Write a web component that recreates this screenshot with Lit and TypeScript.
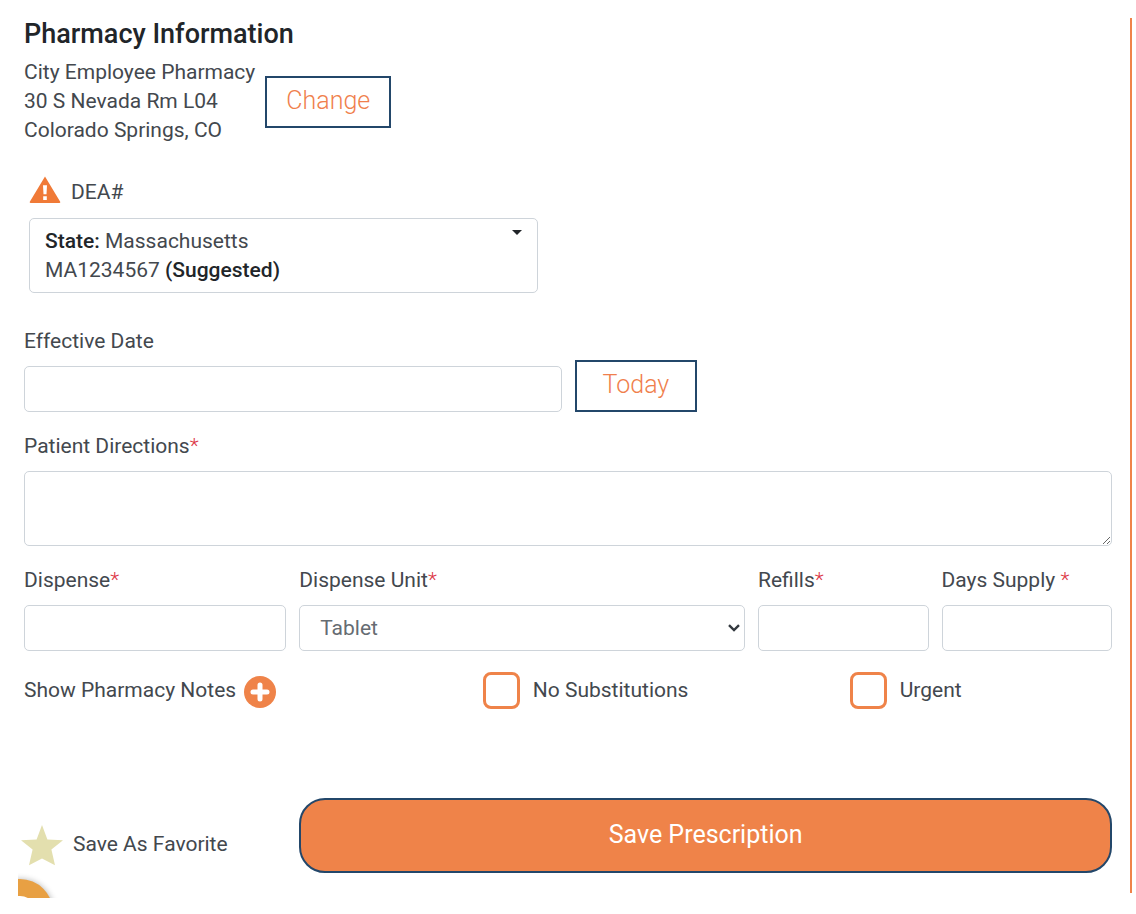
import { LitElement, html, css } from "lit";
import { customElement } from "lit/decorators.js";

@customElement("app-root")
export class AppRoot extends LitElement {
  static styles = css`
    :host {
      display: block;
      padding: 18px 4px 16px 18px;
      background: #fff;
      color: #43484e;
      font-family: Roboto, "Noto Sans", sans-serif;
      font-size: 21px;
      font-weight: 400;
      line-height: 29px;
    }
    * {
      box-sizing: border-box;
    }
    button,
    input,
    select,
    textarea {
      font: inherit;
      color: inherit;
      margin: 0;
    }
    .panel {
      position: relative;
      border-right: 2px solid #ef8349;
      padding: 0 18px 20px 6px;
    }
    h2 {
      margin: 0 0 8px;
      font-size: 27px;
      font-weight: 500;
      line-height: 32px;
      color: #212529;
    }
    .pharmacy {
      display: flex;
      align-items: center;
      gap: 10px;
    }
    address {
      font-style: normal;
    }
    .outline {
      border: 2px solid #23476a;
      background: #fff;
      color: #f07f4d;
      font-size: 25px;
      font-weight: 300;
      line-height: 32px;
      padding: 7px 19px 9px;
    }
    .outline.wide {
      padding-inline: 26px;
    }
    .dea {
      padding: 31px 0 0 5px;
    }
    .dea-title {
      display: flex;
      align-items: center;
      gap: 10px;
      height: 32px;
    }
    .warning {
      align-self: flex-start;
      width: 32px;
      height: 28px;
    }
    .grid {
      display: grid;
      grid-template-columns: repeat(12, minmax(0, 1fr));
      column-gap: 13px;
    }
    .span2 {
      grid-column: span 2;
    }
    .span3 {
      grid-column: span 3;
    }
    .span4 {
      grid-column: span 4;
    }
    .span5 {
      grid-column: span 5;
    }
    .span6 {
      grid-column: span 6;
    }
    .span9 {
      grid-column: span 9;
    }
    .picker {
      display: flex;
      justify-content: space-between;
      width: calc(100% - 24px);
      margin-top: 10px;
      padding: 8px 15px 7px;
      border: 1px solid #ced4da;
      border-radius: 5px;
      background: #fff;
      text-align: left;
    }
    .picker b {
      font-weight: 500;
      color: #212529;
    }
    .caret {
      width: 10px;
      height: 5px;
      margin-top: 3px;
    }
    label {
      display: block;
    }
    .star {
      color: #dc3545;
      font-weight: 300;
    }
    .control {
      display: block;
      width: 100%;
      height: 46px;
      padding: 8px 20px;
      border: 1px solid #ced4da;
      border-radius: 5px;
      background: #fff;
    }
    .effective {
      margin-top: 34px;
    }
    .date-row {
      margin-top: 4px;
      align-items: end;
    }
    .directions {
      margin-top: 20px;
    }
    .directions textarea {
      height: 75px;
      margin-top: 10px;
      resize: vertical;
    }
    .amounts {
      margin-top: 20px;
    }
    .amounts .control {
      margin-top: 10px;
    }
    select.control {
      appearance: none;
      padding-bottom: 10px;
      color: #666c72;
      background: #fff
        url("data:image/svg+xml,%3Csvg xmlns='http://www.w3.org/2000/svg' width='12' height='8' fill='none' stroke='%23343a40' stroke-width='2.4'%3E%3Cpath d='M1 1.2 6 6l5-4.8'/%3E%3C/svg%3E")
        no-repeat right 4px center;
    }
    .options {
      margin-top: 21px;
      align-items: center;
    }
    .notes {
      display: flex;
      align-items: center;
      gap: 8px;
    }
    .icon-button {
      display: flex;
      padding: 2px 0 0;
      border: 0;
      background: none;
    }
    .plus {
      width: 32px;
      height: 32px;
    }
    .check {
      display: flex;
      align-items: center;
      gap: 13px;
    }
    .check input {
      appearance: none;
      width: 37px;
      height: 37px;
      border: 3px solid #ef8349;
      border-radius: 8px;
      background: #fff;
    }
    .check input:checked {
      background: #ef8349;
    }
    .actions {
      margin-top: 89px;
      align-items: center;
    }
    .favorite {
      display: flex;
      align-items: center;
      gap: 10px;
      margin: 18px 0 0 -3px;
      padding: 0;
      border: 0;
      background: none;
    }
    .favorite svg {
      width: 42px;
      height: 42px;
    }
    .save {
      height: 75px;
      padding-bottom: 2px;
      border: 2px solid #23476a;
      border-radius: 26px;
      background: #ef8349;
      color: #fff;
      font-size: 25px;
      line-height: 32px;
    }
    .bubble {
      position: absolute;
      left: 0;
      bottom: -5px;
      width: 48px;
      height: 29px;
    }
  `;

  render() {
    const required = html`<span class="star">*</span>`;
    return html`
      <form class="panel" @submit=${(e: Event) => e.preventDefault()}>
        <h2>Pharmacy Information</h2>
        <div class="pharmacy">
          <address>
            City Employee Pharmacy<br />30 S Nevada Rm L04<br />Colorado
            Springs, CO
          </address>
          <button class="outline" type="button">Change</button>
        </div>

        <div class="grid">
          <div class="dea span6">
            <div class="dea-title">
              <svg class="warning" viewBox="0 0 32 28" aria-hidden="true">
                <path
                  d="M16 .6 31.2 25.8a.8.8 0 0 1-.7 1.2H1.5a.8.8 0 0 1-.7-1.2Z"
                  fill="#f07a37"
                />
                <path
                  d="M14 9.3h4l-.5 9h-3zM14.2 20.3h3.6v3.6h-3.6z"
                  fill="#fff"
                />
              </svg>
              <span id="dea">DEA#</span>
            </div>
            <button
              class="picker"
              type="button"
              aria-haspopup="listbox"
              aria-labelledby="dea dea-value"
            >
              <span id="dea-value"
                ><b>State:</b> Massachusetts<br />MA1234567
                <b>(Suggested)</b></span
              >
              <svg class="caret" viewBox="0 0 10 5" aria-hidden="true">
                <path d="M0 0h10L5 5Z" fill="#212529" />
              </svg>
            </button>
          </div>
        </div>

        <div class="effective">
          <label for="date">Effective Date</label>
          <div class="grid date-row">
            <input id="date" class="control span6" type="text" />
            <div class="span3">
              <button class="outline wide" type="button">Today</button>
            </div>
          </div>
        </div>

        <div class="directions">
          <label for="directions">Patient Directions${required}</label>
          <textarea id="directions" class="control" required></textarea>
        </div>

        <div class="grid amounts">
          <div class="span3">
            <label for="dispense">Dispense${required}</label>
            <input id="dispense" class="control" type="text" required />
          </div>
          <div class="span5">
            <label for="unit">Dispense Unit${required}</label>
            <select id="unit" class="control" required>
              <option>Tablet</option>
            </select>
          </div>
          <div class="span2">
            <label for="refills">Refills${required}</label>
            <input id="refills" class="control" type="text" required />
          </div>
          <div class="span2">
            <label for="days">Days Supply ${required}</label>
            <input id="days" class="control" type="text" required />
          </div>
        </div>

        <div class="grid options">
          <div class="notes span5">
            <span id="notes">Show Pharmacy Notes</span>
            <button class="icon-button" type="button" aria-labelledby="notes">
              <svg class="plus" viewBox="0 0 32 32" aria-hidden="true">
                <circle cx="16" cy="16" r="16" fill="#ef8349" />
                <path
                  d="M16 9v14M9 16h14"
                  stroke="#fff"
                  stroke-width="5"
                  stroke-linecap="round"
                />
              </svg>
            </button>
          </div>
          <label class="check span4"
            ><input type="checkbox" /><span>No Substitutions</span></label
          >
          <label class="check span3"
            ><input type="checkbox" /><span>Urgent</span></label
          >
        </div>

        <div class="grid actions">
          <button class="favorite span3" type="button">
            <svg viewBox="0 0 42 42" aria-hidden="true">
              <path
                d="M21 1l5.4 14.6L42 16.2 30.4 25.6 34 41.2 21 34.6 8 41.2l3.6-15.6L0 16.2l15.6-.6Z"
                fill="#e3dfae"
              />
            </svg>
            <span>Save As Favorite</span>
          </button>
          <button class="save span9" type="submit">Save Prescription</button>
        </div>

        <svg class="bubble" viewBox="0 0 48 29" aria-hidden="true">
          <defs>
            <filter id="soft" x="-50%" y="-50%" width="200%" height="200%">
              <feGaussianBlur stdDeviation="3" />
            </filter>
          </defs>
          <circle
            cx="2"
            cy="44"
            r="34"
            fill="#000"
            opacity=".28"
            filter="url(#soft)"
          />
          <circle cx="2" cy="43" r="33" fill="#e8a043" />
          <circle cx="2" cy="43" r="16" fill="#fff" />
        </svg>
      </form>
    `;
  }
}
